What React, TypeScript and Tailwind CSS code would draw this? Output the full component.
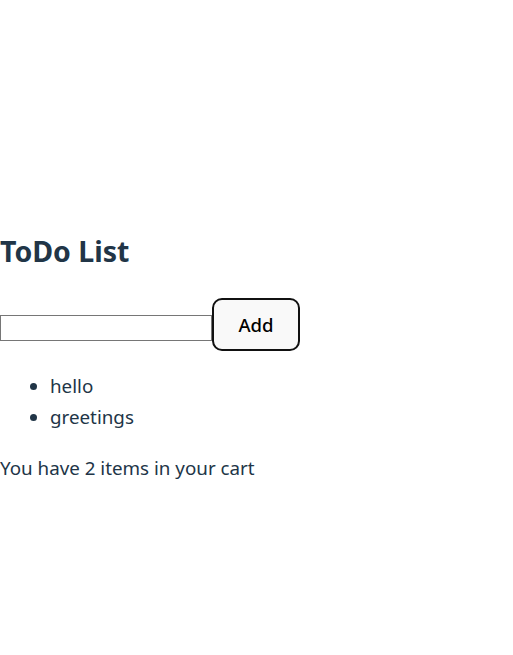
import { useState } from "react";

export default function App() {
  const [items, setItems] = useState<string[]>(["hello", "greetings"]);
  const [text, setText] = useState("");

  const addItem = () => {
    if (!text.trim()) return;
    setItems([...items, text]);
    setText("");
  };

  return (
    <div className="min-h-screen flex items-center pt-[56px] bg-white text-[#213547] font-['Segoe_UI','Noto_Sans',sans-serif] text-[18.8px] leading-[1.5]">
      <div>
        <h2 className="text-[28.5px] font-bold leading-[1.2] mt-[23px] mb-[30px]">ToDo List</h2>
        <div className="flex items-center">
          <input
            value={text}
            onChange={(e) => setText(e.target.value)}
            className="w-[212px] h-[26px] mt-[6px] border border-[#767676] bg-white outline-none"
          />
          <button
            onClick={addItem}
            className="w-[88px] h-[53px] rounded-[10px] border-2 border-[#111] bg-[#f9f9f9] text-[18.5px] font-medium text-black"
          >
            Add
          </button>
        </div>
        <ul className="list-disc pl-[50px] mt-[20px] mb-[18px]">
          {items.map((item) => (
            <li key={item} className="leading-[31px]">
              {item}
            </li>
          ))}
        </ul>
        <p className="mt-[21px] mb-[18px]">You have {items.length} items in your cart</p>
      </div>
    </div>
  );
}
